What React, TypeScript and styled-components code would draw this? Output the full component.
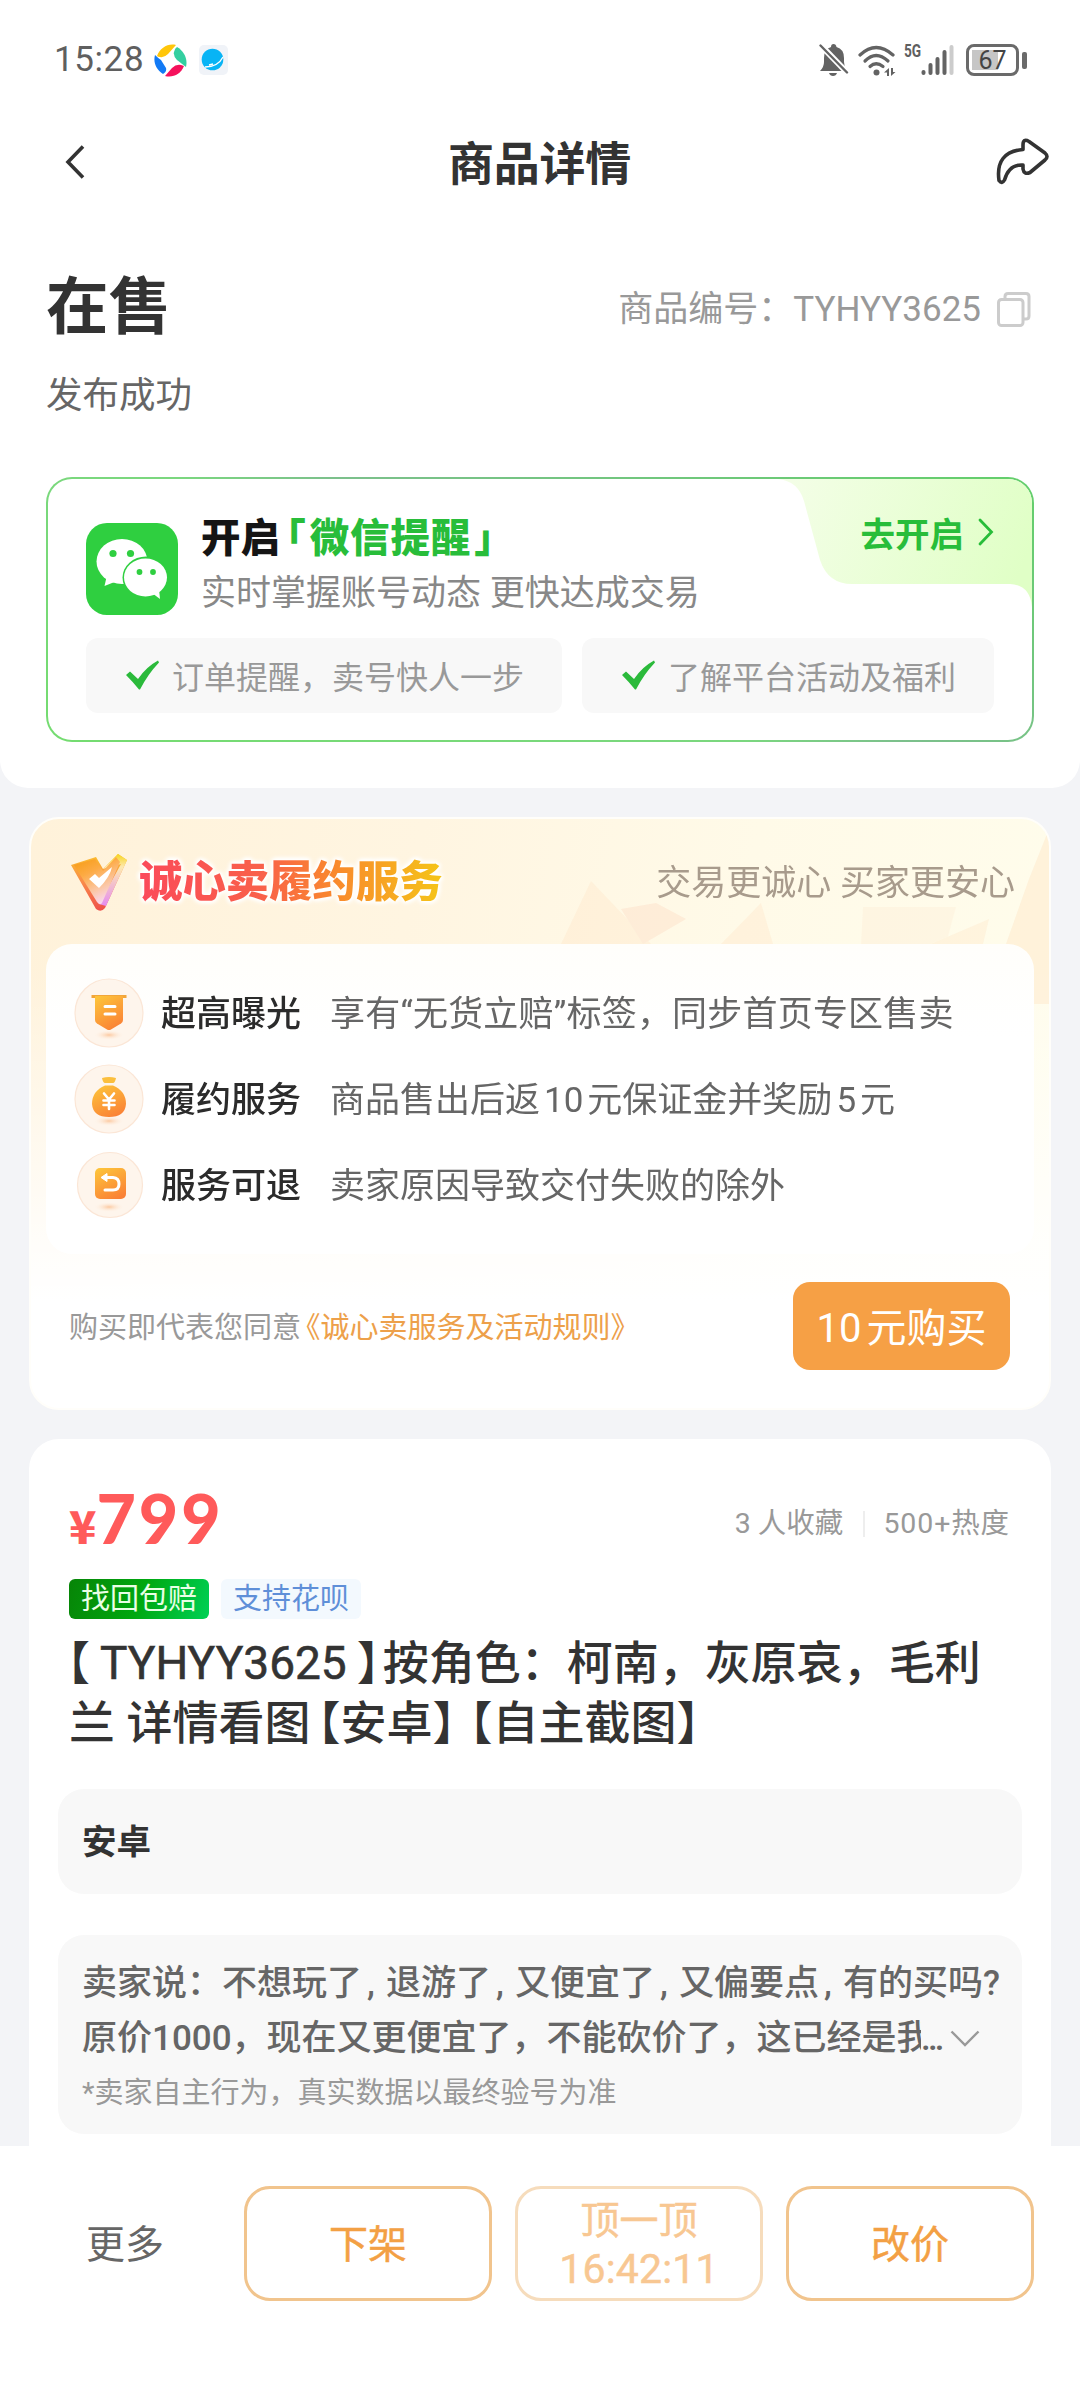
import React from "react";
import styled, { createGlobalStyle, css } from "styled-components";

const Global = createGlobalStyle`
  * { box-sizing: border-box; }
  body {
    margin: 0;
    background: #f3f4f7;
    font-family: Roboto, "Noto Sans CJK SC", "Liberation Sans", sans-serif;
    color: #333;
  }
`;

const Screen = styled.main`
  width: 1080px;
  height: 2388px;
  overflow: hidden;
  display: flex;
  flex-direction: column;
  background: #f3f4f7;
`;

/* ---------- top ---------- */
const TopPanel = styled.section`
  flex: none;
  height: 788px;
  background: #fff;
  border-radius: 0 0 28px 28px;
  display: flex;
  flex-direction: column;
`;

const StatusBar = styled.div`
  height: 120px;
  padding: 0 52px 0 54px;
  display: flex;
  align-items: center;
  color: #5f5f5f;
`;

const Clock = styled.span`
  width: 100px;
  font-size: 35px;
  line-height: 40px;
  letter-spacing: 0.6px;
`;

const StatusRight = styled.div`
  margin-left: auto;
  display: flex;
  align-items: center;
`;

const NavBar = styled.header`
  height: 84px;
  padding: 0 30px 0 64px;
  display: flex;
  align-items: center;
  justify-content: space-between;
`;

const NavTitle = styled.h1`
  margin: 0 0 0 -3px;
  padding-top: 3px;
  font-size: 46px;
  line-height: 60px;
  font-weight: 700;
  letter-spacing: -0.2px;
`;

const StateRow = styled.div`
  margin-top: 60px;
  height: 84px;
  padding: 0 49px 0 46px;
  display: flex;
  align-items: center;
  justify-content: space-between;
`;

const StateTitle = styled.h2`
  margin: 0;
  padding-top: 3px;
  font-size: 62.5px;
  line-height: 84px;
  font-weight: 700;
`;

const Serial = styled.div`
  display: flex;
  align-items: center;
  padding-top: 7px;
  font-size: 35px;
  line-height: 48px;
  color: #999;
  svg { margin-left: 16px; }
`;

const StateNote = styled.p`
  margin: 23px 0 0 46px;
  font-size: 36.5px;
  line-height: 50px;
  color: #666;
`;

/* ---------- reminder card ---------- */
const Reminder = styled.section`
  position: relative;
  margin: 56px 46px 0;
  height: 265px;
  padding: 33px 38px 0;
  border: 2px solid transparent;
  border-radius: 26px;
  background:
    linear-gradient(#fff, #fff) padding-box,
    linear-gradient(25deg, #74dc70, #7bd77f 45%, #7cc08c 55%, #63cf6b) border-box;
`;

const ReminderHead = styled.div`
  display: flex;
  gap: 23px;
  svg { margin-top: 11px; }
`;

const ReminderTitle = styled.h3`
  margin: 0;
  padding-top: 1px;
  font-size: 39.5px;
  line-height: 52px;
  font-weight: 900;
  color: #151515;
  em {
    margin: 0 3px;
    font-style: normal;
    letter-spacing: 0.9px;
    color: #28bd3a;
    font-feature-settings: "halt";
  }
  em:first-of-type {
    margin: 0 0 0 6px;
  }
  em:last-of-type {
    margin: 0;
  }
`;

const ReminderSub = styled.p`
  margin: 1px 0 0;
  font-size: 35px;
  line-height: 56px;
  color: #888;
`;

const Perks = styled.div`
  margin-top: 16px;
  display: flex;
  gap: 20px;
`;

const Perk = styled.div<{ $width: number }>`
  width: ${(p) => p.$width}px;
  height: 75px;
  padding: 0 0 2px 39px;
  border-radius: 12px;
  background: #f8f8f8;
  display: flex;
  align-items: center;
  gap: 12px;
  font-size: 32px;
  color: #999;
  white-space: nowrap;
`;

const Corner = styled.div`
  position: absolute;
  top: 0;
  right: 0;
  width: 254px;
  height: 128px;
  border-radius: 0 24px 0 0;
  overflow: hidden;
`;

const CornerShape = styled.svg`
  position: absolute;
  inset: 0;
`;

const CornerLabel = styled.div`
  position: relative;
  height: 108px;
  padding: 0 38px 2px 0;
  display: flex;
  align-items: center;
  justify-content: flex-end;
  gap: 14px;
  font-size: 34.5px;
  font-weight: 700;
  color: #28bd3a;
`;

/* ---------- service card ---------- */
const Service = styled.section`
  position: relative;
  flex: none;
  margin: 29px 29px 0;
  height: 593px;
  border: 2px solid #fffefa;
  border-radius: 30px;
  overflow: hidden;
  background:
    linear-gradient(to bottom, rgba(255, 255, 255, 0) 25%, rgba(255, 255, 255, 0.85) 72%, #fff 82%),
    linear-gradient(100deg, #fff2da 0%, #fff5e1 35%, #fffae8 65%, #fffdec 100%);
`;

const Facets = styled.svg`
  position: absolute;
  left: 0;
  top: 0;
`;

const ServiceHead = styled.div`
  position: relative;
  height: 125px;
  padding: 0 34px 0 38px;
  display: flex;
  align-items: center;
  justify-content: space-between;
`;

const Brand = styled.div`
  display: flex;
  align-items: center;
  gap: 10px;
`;

const BrandName = styled.span`
  padding-top: 2px;
  font-size: 43.4px;
  line-height: 60px;
  font-weight: 900;
  background: linear-gradient(90deg, #fb4a5a 0%, #f9604a 40%, #f98a2c 65%, #f5c518 100%);
  background-clip: text;
  -webkit-background-clip: text;
  color: transparent;
  filter: drop-shadow(0 0 2px #fff) drop-shadow(0 0 2px #fff) drop-shadow(0 0 1px #fff);
`;

const Slogan = styled.span`
  padding-top: 4px;
  font-size: 35px;
  line-height: 50px;
  color: #a89b8c;
`;

const Benefits = styled.ul`
  position: relative;
  margin: 0 15px;
  height: 310px;
  padding: 26px 0 0 28px;
  list-style: none;
  border-radius: 26px;
  background: linear-gradient(#fffefb, #fff 30%);
`;

const Benefit = styled.li`
  height: 86px;
  display: flex;
  align-items: center;
  font-size: 35px;
  line-height: 50px;
  color: #666;
  white-space: nowrap;
`;

const BenefitName = styled.strong`
  width: 169px;
  margin-left: 17px;
  padding-top: 3px;
  font-weight: 500;
  color: #2b2b2b;
`;

const BenefitText = styled.span<{ $spacing?: number }>`
  padding-top: 3px;
  letter-spacing: ${(p) => p.$spacing ?? 0}px;
`;

const ServiceFoot = styled.div`
  position: relative;
  margin-top: 28px;
  padding: 0 39px 0 38px;
  display: flex;
  align-items: center;
  justify-content: space-between;
`;

const Agreement = styled.p`
  margin: 0;
  padding-top: 4px;
  font-size: 29px;
  line-height: 40px;
  color: #999;
  a {
    margin-left: 5px;
    color: #eda04a;
    font-feature-settings: "halt";
  }
`;

const BuyButton = styled.button`
  width: 217px;
  height: 88px;
  padding: 0 0 3px;
  border: 0;
  border-radius: 17px;
  background: #f6a045;
  color: #fff;
  font-family: inherit;
  font-size: 40px;
`;

const Num = styled.span<{ $l?: number; $r?: number }>`
  margin-left: ${(p) => p.$l ?? 0}px;
  margin-right: ${(p) => p.$r ?? 0}px;
`;

/* ---------- goods card ---------- */
const Goods = styled.section`
  margin: 29px 29px 0;
  height: 707px;
  flex: none;
  padding: 0 29px;
  border-radius: 30px 30px 0 0;
  background: #fff;
`;

const PriceRow = styled.div`
  height: 140px;
  padding: 28px 12px 0 11px;
  display: flex;
  align-items: center;
  justify-content: space-between;
`;

const Price = styled.div`
  display: flex;
  align-items: baseline;
  padding-bottom: 10px;
  color: #ff5a5a;
  font-family: Lato, "Noto Sans CJK SC", sans-serif;
  font-weight: 900;
  font-size: 68px;
  line-height: 80px;
  letter-spacing: 3px;
  small {
    font-family: "Noto Sans CJK SC", sans-serif;
    font-size: 45px;
    line-height: 60px;
    letter-spacing: 0;
  }
`;

const Stats = styled.div`
  display: flex;
  align-items: center;
  padding-top: 2px;
  font-size: 28.5px;
  line-height: 40px;
  color: #999;
  span + span {
    margin-left: 20px;
    padding-left: 20px;
    letter-spacing: 0.9px;
    background: linear-gradient(#eee, #eee) left center / 2px 26px no-repeat;
  }
`;

const Tags = styled.div`
  display: flex;
  gap: 12px;
  padding-left: 11px;
`;

const Tag = styled.span<{ $tone: "green" | "blue" }>`
  width: 140px;
  height: 40px;
  border-radius: 6px;
  font-size: 29px;
  line-height: 41px;
  text-align: center;
  ${(p) =>
    p.$tone === "green"
      ? css`
          background: linear-gradient(110deg, #078407, #00a70f 50%, #00d156);
          color: #e9ffe6;
        `
      : css`
          background: #f3f9fe;
          color: #5f8fd8;
        `}
`;

const GoodsTitle = styled.h3`
  margin: 14px 0 0 11px;
  font-size: 46px;
  line-height: 60px;
  font-weight: 500;
  white-space: nowrap;
  color: #333;
`;

const Bracket = styled.span<{ $l?: number; $r?: number }>`
  margin-left: ${(p) => p.$l ?? 0}px;
  margin-right: ${(p) => p.$r ?? 0}px;
  font-feature-settings: "halt";
`;

const Code = styled.span`
  font-size: 46px;
  line-height: 1;
  font-weight: 400;
  -webkit-text-stroke: 0.6px #333;
`;

const Panel = styled.div<{ $top: number; $height: number }>`
  margin-top: ${(p) => p.$top}px;
  height: ${(p) => p.$height}px;
  padding: 0 24px;
  border-radius: 26px;
  background: #f8f8f8;
`;

const PanelTitle = styled.strong`
  display: block;
  font-size: 34.5px;
  line-height: 107px;
  font-weight: 700;
`;

const Speech = styled.div`
  padding-top: 21px;
  font-size: 35px;
  line-height: 55px;
  font-weight: 500;
  color: #666;
  white-space: nowrap;
`;

const Comma = styled.i`
  display: inline-block;
  width: 24px;
  padding-left: 5px;
  font-style: normal;
`;

const SpeechLast = styled.div`
  display: flex;
  align-items: center;
  svg { margin-left: 8px; }
`;

const Clipped = styled.span`
  width: 839px;
  overflow: hidden;
`;

const Dots = styled.span`
  width: 21px;
  letter-spacing: -2.8px;
`;

const Disclaimer = styled.p`
  margin: 2px 0 0;
  font-size: 29px;
  line-height: 50px;
  color: #999;
`;

/* ---------- bottom bar ---------- */
const ActionBar = styled.footer`
  flex: 1;
  padding: 40px 46px 0 0;
  display: flex;
  background: #fff;
`;

const More = styled.div`
  width: 244px;
  height: 115px;
  padding-left: 86px;
  font-size: 39px;
  line-height: 118px;
  color: #666;
`;

const Action = styled.button<{ $muted?: boolean }>`
  width: 248px;
  height: 115px;
  margin-right: 23px;
  padding: 2px 0 0;
  border: 3px solid #f1c48d;
  border-radius: 26px;
  background: #fff;
  font-family: inherit;
  font-size: 39px;
  line-height: 48px;
  font-weight: 400;
  -webkit-text-stroke: 0.5px #f3a044;
  color: #f3a044;
  opacity: ${(p) => (p.$muted ? 0.58 : 1)};
  &:last-child { margin-right: 0; }
  time {
    display: block;
    font-size: 41px;
    letter-spacing: 0.2px;
  }
`;

/* ---------- icons ---------- */
const PinwheelIcon = () => (
  <svg width="33" height="33" viewBox="0 0 33 33">
    <path d="M3 12C6 4 14-1 22 1L14 10Q10 14 6 13Q4 13 3 12Z" fill="#ffc60a" />
    <path d="M23 3C30 7 34 15 32 23L23 16Q19 12 20 8Q21 4 23 3Z" fill="#34cfa0" />
    <path d="M30 22C27 30 19 34 11 32L18 24Q22 20 27 21Z" fill="#f5115c" />
    <path d="M1 11C-1 18 2 26 9 30Q13 28 12 24L7 16Q4 14 1 11Z" fill="#127af5" />
  </svg>
);

const GlobeSvg = styled.svg`
  margin-left: 12px;
`;

const GlobeIcon = () => (
  <GlobeSvg width="29" height="30" viewBox="0 0 29 30">
    <rect width="29" height="30" rx="5" fill="#f0f3f8" />
    <circle cx="13.500" cy="14.500" r="10.800" fill="#08b4f5" />
    <path d="M6 22Q19 22 24 12M10 20l4-1" fill="none" stroke="#fff" strokeWidth="1.300" />
  </GlobeSvg>
);

const BellOffIcon = () => (
  <svg width="30" height="34" viewBox="0 0 30 34">
    <path d="M1 28Q5 24 5 19V15Q5 6 12 4Q12 1 14.500 1Q17 1 17.500 4Q25 6 25 15V19Q25 24 28 28Z" fill="#636363" />
    <path d="M10 30H18Q17 33 14 33Q11 33 10 30Z" fill="#636363" />
    <path d="M1.500 2L28.500 30" stroke="#fff" strokeWidth="6" />
    <path d="M1.500 2.500L28 29.500" stroke="#636363" strokeWidth="2.400" strokeLinecap="round" />
  </svg>
);

const WifiSvg = styled.svg`
  margin-left: 9px;
`;

const WifiIcon = () => (
  <WifiSvg width="38" height="33" viewBox="0 0 38 33">
    <g fill="none" stroke="#636363" strokeWidth="3.200" strokeLinecap="round">
      <path d="M2 11Q18 -4 35 11" />
      <path d="M7 17Q18 6 30 17" />
      <path d="M12 22.500Q18 17 25 22.500" />
    </g>
    <circle cx="18.500" cy="28.500" r="3" fill="#636363" />
    <path d="M26 28.500L31 24V32H29V28.500Z" fill="#636363" />
    <path d="M33 24V32L37.500 28H35V24Z" fill="#636363" />
  </WifiSvg>
);

const NetLabel = styled.b`
  align-self: flex-start;
  margin: -1px 0 0 8px;
  width: 17px;
  font-size: 19px;
  line-height: 18px;
  font-weight: 700;
  transform: scaleX(0.72);
  transform-origin: left top;
`;

const SignalIcon = () => (
  <svg width="33" height="33" viewBox="0 0 33 33">
    <g stroke="#636363" strokeWidth="4" strokeLinecap="round">
      <path d="M2.500 28V29" />
      <path d="M9.500 21V29" />
      <path d="M16.500 15V29" />
      <path d="M23.500 8V29" />
      <path d="M30.500 3V29" stroke="#ccc" />
    </g>
  </svg>
);

const Battery = styled.span`
  position: relative;
  margin-left: 12px;
  margin-right: 9px;
  width: 53px;
  height: 32px;
  border: 3px solid #6a6a6a;
  border-radius: 8px;
  background: linear-gradient(#c6c6c6, #c6c6c6) 3px center / 26px 20px no-repeat;
  font-size: 25px;
  line-height: 27px;
  text-align: center;
  color: #444;
  &::after {
    content: "";
    position: absolute;
    right: -11px;
    top: 5px;
    width: 5px;
    height: 17px;
    border-radius: 2px;
    background: #6a6a6a;
  }
`;

const BackIcon = () => (
  <svg width="22" height="36" viewBox="0 0 22 36">
    <path d="M19 2.500L4 18L19 33.500" fill="none" stroke="#333" strokeWidth="3.600" />
  </svg>
);

const ShareIcon = () => (
  <svg width="54" height="48" viewBox="0 0 54 48">
    <path
      d="M27 11.500V7Q27 0 33 3.500L49 15Q53 18.500 49 22L34 34.500Q28 37 27 31V27Q13 26 8.500 42Q6 46.500 3 42.500Q-1 14 27 11.500Z"
      fill="none"
      stroke="#333"
      strokeWidth="3.600"
      strokeLinejoin="round"
    />
  </svg>
);

const CopyIcon = () => (
  <svg width="34" height="35" viewBox="0 0 34 35">
    <g fill="none" stroke="#ccc" strokeWidth="3">
      <rect x="1.500" y="7.500" width="24.500" height="26" rx="3" />
      <path d="M8 7V4.500Q8 1.500 11 1.500H29Q32 1.500 32 4.500V24Q32 27 29 27H26" />
    </g>
  </svg>
);

const WechatIcon = () => (
  <svg width="92" height="92" viewBox="0 0 92 92">
    <rect width="92" height="92" rx="21" fill="#2fcf40" />
    <ellipse cx="36" cy="38.500" rx="25.500" ry="22.500" fill="#fff" />
    <path d="M21 52L18.500 63L31 58Z" fill="#fff" />
    <ellipse cx="60" cy="54.500" rx="23.500" ry="21" fill="#2fcf40" />
    <ellipse cx="59.500" cy="54.500" rx="21.500" ry="19" fill="#fff" />
    <path d="M66 70L74 76L73 66Z" fill="#fff" />
    <g fill="#2fcf40">
      <circle cx="27" cy="30.500" r="3.600" />
      <circle cx="44.500" cy="30.500" r="3.600" />
      <circle cx="53.500" cy="49" r="2.900" />
      <circle cx="67" cy="49" r="2.900" />
    </g>
  </svg>
);

const CheckIcon = () => (
  <svg width="35" height="30" viewBox="0 0 35 30">
    <path d="M1 15L5 11.500L13 19Q21 7 33 0.500L34 2.500Q23 14 15 29.500H14Q8 22 1 15Z" fill="#2bba3b" />
  </svg>
);

const ChevronRight = () => (
  <svg width="16" height="28" viewBox="0 0 16 28">
    <path d="M2 2L13.500 14L2 26" fill="none" stroke="#28bd3a" strokeWidth="2.800" strokeLinecap="round" />
  </svg>
);

const ChevronDown = () => (
  <svg width="30" height="17" viewBox="0 0 30 17">
    <path d="M1.500 1.500L15 15L28.500 1.500" fill="none" stroke="#999" strokeWidth="2.400" />
  </svg>
);

const BrandIcon = () => (
  <svg width="60" height="60" viewBox="0 0 60 60">
    <defs>
      <linearGradient id="vface" x1="0" y1="0" x2="0.500" y2="1">
        <stop offset="0" stopColor="#f59a0c" />
        <stop offset="0.400" stopColor="#fdab45" />
        <stop offset="0.750" stopColor="#fbc7a6" />
        <stop offset="1" stopColor="#f9d5ec" />
      </linearGradient>
      <linearGradient id="vedge" x1="0" y1="0" x2="0" y2="1">
        <stop offset="0" stopColor="#fbc02a" />
        <stop offset="0.500" stopColor="#f98a4a" />
        <stop offset="1" stopColor="#ee4f4a" />
      </linearGradient>
      <linearGradient id="vside" x1="0" y1="0" x2="0" y2="1">
        <stop offset="0" stopColor="#f7d51e" />
        <stop offset="0.250" stopColor="#fde9b0" />
        <stop offset="1" stopColor="#e58cf0" />
      </linearGradient>
    </defs>
    <path d="M2 13L27 5L34 17L49 2L58 8L36 56Q32 61 27 57Z" fill="url(#vedge)" />
    <path d="M34 17L49 2L58 8L37 54L30 52L52 12Z" fill="url(#vside)" />
    <path d="M5 13L26 7L34 19L47 5L51 10L33 51Q31 54 28 50Z" fill="url(#vface)" />
    <path d="M20 27L26 22L30 26L43 15Q41 25 30 36Z" fill="#fff" />
  </svg>
);

type BenefitKind = "banner" | "bag" | "refund";

const BenefitIcon = ({ kind }: { kind: BenefitKind }) => (
  <svg width="70" height="72" viewBox="0 0 70 72">
    <defs>
      <linearGradient id={`g-${kind}`} x1="0.200" y1="0" x2="0.700" y2="1">
        <stop offset="0" stopColor="#fdc23a" />
        <stop offset="1" stopColor="#fa8136" />
      </linearGradient>
      <radialGradient id={`s-${kind}`}>
        <stop offset="0" stopColor="#fcc9a0" />
        <stop offset="1" stopColor="#fef3e8" stopOpacity="0" />
      </radialGradient>
    </defs>
    <circle cx={kind === "refund" ? 36 : 35} cy="36" r={kind === "refund" ? 32.5 : 34} fill="#fef5ec" stroke="#fbe6d6" strokeWidth="1.200" />
    <ellipse cx="35" cy="58" rx="15" ry="5" fill={`url(#s-${kind})`} />
    {kind === "banner" && (
      <>
        <path d="M17.500 18H52.500V21H17.500Z" fill="#f2a63a" />
        <path d="M21 19H49V43Q49 45 47 46.500L37 52.500Q35 53.500 33 52.500L23 46.500Q21 45 21 43Z" fill="url(#g-banner)" />
        <path d="M31 29.500H41M31 37H41" stroke="#fff" strokeWidth="3" strokeLinecap="round" />
      </>
    )}
    {kind === "bag" && (
      <>
        <path d="M28 15Q35 13 42 15Q41 20 39 20H31Q29 20 28 15Z" fill="#fbbf3e" />
        <path d="M31 22.500H39Q52 28 52 41Q51 54 35 54Q19 54 18 41Q18 28 31 22.500Z" fill="url(#g-bag)" />
        <path d="M30 30.500L35 36.500L40 30.500M35 36.500V46M29.500 37.500H40.500M29.500 42H40.500" fill="none" stroke="#fff" strokeWidth="2.600" strokeLinecap="round" />
      </>
    )}
    {kind === "refund" && (
      <>
        <rect x="21" y="19" width="31" height="31" rx="5" fill="url(#g-refund)" />
        <path d="M31 28.500H39Q45 29 45 35Q45 41 39 41H31" fill="none" stroke="#fff" strokeWidth="3" strokeLinecap="round" />
        <path d="M27 28.500L33 24.500V32.500Z" fill="#fff" stroke="#fff" strokeLinejoin="round" />
      </>
    )}
  </svg>
);

const benefits: { kind: BenefitKind; name: string; spacing?: number; text: React.ReactNode }[] = [
  { kind: "banner", name: "超高曝光", spacing: 0.2, text: "享有“无货立赔”标签，同步首页专区售卖" },
  {
    kind: "bag",
    name: "履约服务",
    text: (
      <>
        商品售出后返<Num $l={4} $r={4}>10</Num>元保证金并奖励<Num $l={4} $r={4}>5</Num>元
      </>
    ),
  },
  { kind: "refund", name: "服务可退", text: "卖家原因导致交付失败的除外" },
];

export default function App() {
  return (
    <Screen>
      <Global />
      <TopPanel>
        <StatusBar>
          <Clock>15:28</Clock>
          <PinwheelIcon />
          <GlobeIcon />
          <StatusRight>
            <BellOffIcon />
            <WifiIcon />
            <NetLabel>5G</NetLabel>
            <SignalIcon />
            <Battery>67</Battery>
          </StatusRight>
        </StatusBar>
        <NavBar>
          <BackIcon />
          <NavTitle>商品详情</NavTitle>
          <ShareIcon />
        </NavBar>
        <StateRow>
          <StateTitle>在售</StateTitle>
          <Serial>
            商品编号：TYHYY3625
            <CopyIcon />
          </Serial>
        </StateRow>
        <StateNote>发布成功</StateNote>
        <Reminder>
          <Corner>
            <CornerShape width="254" height="128" viewBox="0 0 254 128">
              <defs>
                <linearGradient id="corner" x1="0" y1="0.300" x2="1" y2="0.500">
                  <stop offset="0" stopColor="#f3fee6" />
                  <stop offset="1" stopColor="#e0ffc6" />
                </linearGradient>
              </defs>
              <path d="M0 0Q20 2 26 22L42 81Q50 105 74 105H232Q252 106 254 128V0Z" fill="url(#corner)" />
            </CornerShape>
            <CornerLabel>
              去开启
              <ChevronRight />
            </CornerLabel>
          </Corner>
          <ReminderHead>
            <WechatIcon />
            <div>
              <ReminderTitle>
                开启<em>「</em><em>微信提醒</em><em>」</em>
              </ReminderTitle>
              <ReminderSub>实时掌握账号动态 更快达成交易</ReminderSub>
            </div>
          </ReminderHead>
          <Perks>
            <Perk $width={476}>
              <CheckIcon />
              订单提醒，卖号快人一步
            </Perk>
            <Perk $width={412}>
              <CheckIcon />
              了解平台活动及福利
            </Perk>
          </Perks>
        </Reminder>
      </TopPanel>

      <Service>
        <Facets width="1018" height="220" viewBox="0 0 1018 220">
          <g fill="#fde3c4" opacity="0.320">
            <path d="M530 125L560 62L620 125Z" />
            <path d="M590 90L625 84L655 100L612 125Z" fill="#fcd3bb" />
            <path d="M690 125L730 84L742 125Z" />
            <path d="M832 88L925 88L915 125H830Z" opacity="0.600" />
            <path d="M900 125L958 100L952 125Z" />
            <path d="M1018 10L998 60L975 125L990 185H1018Z" fill="#fddcb8" />
          </g>
        </Facets>
        <ServiceHead>
          <Brand>
            <BrandIcon />
            <BrandName>诚心卖履约服务</BrandName>
          </Brand>
          <Slogan>交易更诚心 买家更安心</Slogan>
        </ServiceHead>
        <Benefits>
          {benefits.map((b) => (
            <Benefit key={b.kind}>
              <BenefitIcon kind={b.kind} />
              <BenefitName>{b.name}</BenefitName>
              <BenefitText $spacing={b.spacing}>{b.text}</BenefitText>
            </Benefit>
          ))}
        </Benefits>
        <ServiceFoot>
          <Agreement>
            购买即代表您同意<a>《诚心卖服务及活动规则》</a>
          </Agreement>
          <BuyButton>
            <Num $r={5}>10</Num>元购买
          </BuyButton>
        </ServiceFoot>
      </Service>

      <Goods>
        <PriceRow>
          <Price>
            <small>¥</small>799
          </Price>
          <Stats>
            <span>3 人收藏</span>
            <span>500+热度</span>
          </Stats>
        </PriceRow>
        <Tags>
          <Tag $tone="green">找回包赔</Tag>
          <Tag $tone="blue">支持花呗</Tag>
        </Tags>
        <GoodsTitle>
          <Bracket $l={-2} $r={10}>【</Bracket>
          <Code>TYHYY3625</Code>
          <Bracket $l={10} $r={3}>】</Bracket>
          按角色：柯南，灰原哀，毛利
          <br />
          兰 详情看图<Bracket $l={7}>【</Bracket>安卓<Bracket $r={7}>】</Bracket>
          <Bracket $l={7}>【</Bracket>自主截图<Bracket>】</Bracket>
        </GoodsTitle>
        <Panel $top={36} $height={105}>
          <PanelTitle>安卓</PanelTitle>
        </Panel>
        <Panel $top={41} $height={199}>
          <Speech>
            <div>
              卖家说：不想玩了<Comma>,</Comma>退游了<Comma>,</Comma>又便宜了<Comma>,</Comma>又偏要点<Comma>,</Comma>有的买吗?
            </div>
            <SpeechLast>
              <Clipped>原价1000，现在又更便宜了，不能砍价了，这已经是我</Clipped>
              <Dots>...</Dots>
              <ChevronDown />
            </SpeechLast>
          </Speech>
          <Disclaimer>*卖家自主行为，真实数据以最终验号为准</Disclaimer>
        </Panel>
      </Goods>

      <ActionBar>
        <More>更多</More>
        <Action>下架</Action>
        <Action $muted>
          顶一顶
          <time>16:42:11</time>
        </Action>
        <Action>改价</Action>
      </ActionBar>
    </Screen>
  );
}
